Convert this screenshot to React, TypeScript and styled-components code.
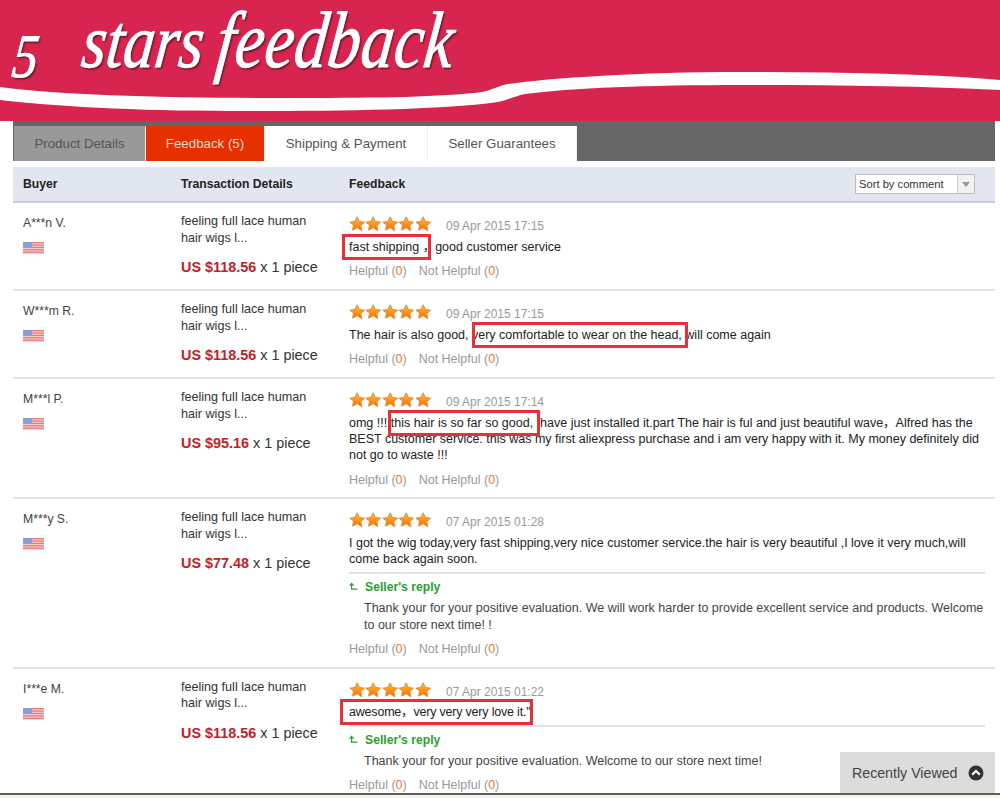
import React from "react";
import styled, { createGlobalStyle } from "styled-components";

const GlobalStyle = createGlobalStyle`
  html, body {
    margin: 0;
    padding: 0;
    height: 798px;
    overflow: hidden;
    background: #fff;
    font-family: "Liberation Sans", "Noto Sans CJK SC", Arial, sans-serif;
  }
`;

const Page = styled.div`
  position: relative;
  width: 1000px;
  height: 798px;
  overflow: hidden;
`;

const Banner = styled.header`
  position: relative;
  height: 121px;
  background: #d8254f;
`;

const Wave = styled.svg`
  position: absolute;
  left: 0;
  top: 0;
`;

const Title = styled.h1`
  position: relative;
  margin: 0;
  padding: 0 0 0 24px;
  font-family: "Liberation Serif", "Times New Roman", serif;
  font-style: italic;
  font-weight: 400;
  font-size: 76px;
  line-height: 80px;
  white-space: pre;
  color: #fff;
  -webkit-text-stroke: 1px #fff;
  text-shadow: 2px 2px 2px rgba(70, 20, 30, 0.75);
  transform-origin: left top;
  transform: scaleX(0.82) skewX(-8deg);
`;

const Numeral = styled.span`
  font-size: 62px;
  margin-right: 52px;
  vertical-align: -10px;
`;

const Feedback = styled.span`
  font-size: 80px;
  letter-spacing: 0.6px;
  margin-left: 16px;
`;

const Content = styled.main`
  margin: 0 5px 0 13px;
`;

const TabBar = styled.nav`
  display: flex;
  align-items: flex-end;
  height: 40px;
  padding-left: 1px;
  box-sizing: border-box;
  background: #666;
`;

const Tab = styled.div<{ $kind?: "muted" | "active"; $width: number }>`
  width: ${(p) => p.$width}px;
  height: 35px;
  box-sizing: border-box;
  display: flex;
  align-items: center;
  justify-content: center;
  font-size: 13.3px;
  border-right: 1px solid #eee;
  color: ${(p) => (p.$kind === "active" ? "#f4d9c8" : "#555")};
  background: ${(p) =>
    p.$kind === "active" ? "#e63000" : p.$kind === "muted" ? "#999" : "#fff"};
`;

const HeaderRow = styled.div`
  display: grid;
  grid-template-columns: 158px 168px 1fr;
  align-items: center;
  height: 36px;
  margin-top: 6px;
  padding-left: 10px;
  box-sizing: border-box;
  background: #e2e6f0;
  border-bottom: 2px solid #c6cede;
  font-size: 12.2px;
  font-weight: 700;
  color: #222;
`;

const HeaderCells = styled.div`
  display: flex;
  justify-content: space-between;
  align-items: center;
  padding-right: 20px;
`;

const SortSelect = styled.div`
  display: flex;
  width: 120px;
  height: 20px;
  box-sizing: border-box;
  border: 1px solid #bbb;
  background: #fff;
  font-weight: 400;
  font-size: 11.2px;
  color: #333;
`;

const SortLabel = styled.span`
  flex: 1;
  padding-left: 3px;
  line-height: 19px;
`;

const SortArrow = styled.span`
  width: 16px;
  display: flex;
  align-items: center;
  justify-content: center;
  background: #f2f2f2;
  border-left: 1px solid #ccc;

  &::after {
    content: "";
    border: 4px solid transparent;
    border-top: 5px solid #999;
    border-bottom: 0;
  }
`;

const Row = styled.article`
  display: grid;
  grid-template-columns: 158px 168px 1fr;
  padding: 11px 0 0 10px;
  border-bottom: 2px solid #e3e3e3;
  font-size: 12.5px;
  color: #333;
`;

const BuyerName = styled.div`
  font-size: 12.2px;
  line-height: 18px;
  color: #444;
`;

const Flag = styled.svg`
  display: block;
  margin-top: 10px;
`;

const Product = styled.div`
  font-size: 12.6px;
  line-height: 16.5px;
  width: 140px;
  margin-top: -1px;
`;

const Price = styled.div`
  margin-top: 12px;
  font-size: 14.4px;
  line-height: 18px;
`;

const Amount = styled.strong`
  color: #c4202a;
`;

const Body = styled.div`
  min-width: 0;
  padding-right: 10px;
`;

const StarLine = styled.div`
  display: flex;
  align-items: center;
  height: 20px;
  gap: 15px;
`;

const Stars = styled.div`
  display: flex;
`;

const DateText = styled.span`
  padding-top: 4px;
  font-size: 12px;
  color: #999;
`;

const Comment = styled.p`
  margin: 4.5px 0 0;
  padding-right: 4px;
  line-height: 16.2px;
  color: #222;
`;

const Marked = styled.span<{ $left: number; $right: number; $tight?: boolean }>`
  padding: 6px ${(p) => p.$right}px 6px ${(p) => p.$left}px;
  margin: 0 ${(p) => -p.$right}px 0 ${(p) => -p.$left}px;
  outline: 3px solid #e8303c;
  outline-offset: -3px;
  letter-spacing: ${(p) => (p.$tight ? "-0.2px" : "normal")};
`;

const Reply = styled.div`
  margin-top: 5px;
  padding-top: 4px;
  border-top: 2px solid #e3e3e3;
`;

const ReplyHead = styled.div`
  display: flex;
  align-items: center;
  gap: 7px;
  height: 18px;
  font-size: 12.2px;
  font-weight: 700;
  color: #2aa12a;
`;

const ReplyText = styled.p`
  margin: 4px 0 -2px 15px;
  line-height: 17px;
  color: #444;
`;

const Votes = styled.div`
  display: flex;
  gap: 12px;
  margin-top: 8.5px;
  height: 25.8px;
  line-height: 16px;
  color: #999;
`;

const Count = styled.span`
  color: #e8772e;
`;

const Recent = styled.aside`
  position: absolute;
  left: 840px;
  top: 752px;
  width: 155px;
  height: 41px;
  box-sizing: border-box;
  padding: 0 11px 0 12px;
  display: flex;
  align-items: center;
  justify-content: space-between;
  background: #dcdcdc;
  font-size: 14.2px;
  color: #444;
`;

const BottomEdge = styled.div`
  position: absolute;
  left: 0;
  right: 0;
  top: 793px;
  height: 5px;
  box-sizing: border-box;
  border-top: 2px solid #5c6050;
  background: #f4f4f0;
`;

const Star = () => (
  <svg width="16.4" height="16" viewBox="0 0 24 24">
    <defs>
      <linearGradient id="starFill" x1="0" y1="0" x2="0" y2="1">
        <stop offset="0" stopColor="#ffc04d" />
        <stop offset="0.55" stopColor="#fb8f1c" />
        <stop offset="1" stopColor="#f06c0c" />
      </linearGradient>
    </defs>
    <path
      d="M12 1.200l3.300 7 7.700 1-5.600 5.300 1.500 7.700L12 17.500l-6.900 3.700 1.500-7.700L1 9.200l7.700-1z"
      fill="url(#starFill)"
      stroke="#f28a20"
      strokeWidth="1.500"
      strokeLinejoin="round"
    />
  </svg>
);

const UsFlag = () => (
  <Flag width="21" height="12" viewBox="0 0 21 12">
    <rect width="21" height="12" fill="#f4d5d5" />
    {[0, 2.4, 4.8, 7.2, 9.6].map((y) => (
      <rect key={y} y={y} width="21" height="1.3" fill="#e27a7a" />
    ))}
    <rect width="9" height="6" fill="#8a9fd6" />
  </Flag>
);

const ReplyArrow = () => (
  <svg width="9" height="10" viewBox="0 0 9 10" fill="none" stroke="#2aa12a" strokeWidth="1.2">
    <path d="M0.600 3.600L2.600 1.400L4.600 3.600M2.600 1.600V7.200H8.500" />
  </svg>
);

const UpIcon = () => (
  <svg width="16" height="16" viewBox="0 0 16 16">
    <circle cx="8" cy="8" r="7.500" fill="#333" />
    <path d="M4.200 9.800L8 6l3.800 3.800" fill="none" stroke="#fff" strokeWidth="2" />
  </svg>
);

type Review = {
  buyer: string;
  price: string;
  date: string;
  comment: React.ReactNode;
  reply?: React.ReactNode;
};

const reviews: Review[] = [
  {
    buyer: "A***n V.",
    price: "US $118.56",
    date: "09 Apr 2015 17:15",
    comment: (
      <>
        <Marked $left={7} $right={12}>
          fast shipping
        </Marked>{" "}
        ，good customer service
      </>
    ),
  },
  {
    buyer: "W***m R.",
    price: "US $118.56",
    date: "09 Apr 2015 17:15",
    comment: (
      <>
        The hair is also good,{" "}
        <Marked $left={0} $right={6}>
          very comfortable to wear on the head,
        </Marked>{" "}
        will come again
      </>
    ),
  },
  {
    buyer: "M***l P.",
    price: "US $95.16",
    date: "09 Apr 2015 17:14",
    comment: (
      <>
        omg !!!{" "}
        <Marked $left={3} $right={7}>
          this hair is so far so good,
        </Marked>{" "}
        &nbsp;have just installed it.part The hair is ful and just beautiful wave，Alfred has the BEST customer service.
        this was my first aliexpress purchase and i am very happy with it. My money definitely did not go to waste !!!
      </>
    ),
  },
  {
    buyer: "M***y S.",
    price: "US $77.48",
    date: "07 Apr 2015 01:28",
    comment:
      "I got the wig today,very fast shipping,very nice customer service.the hair is very beautiful ,I love it very much,will come back again soon.",
    reply:
      "Thank your for your positive evaluation. We will work harder to provide excellent service and products. Welcome to our store next time! !",
  },
  {
    buyer: "I***e M.",
    price: "US $118.56",
    date: "07 Apr 2015 01:22",
    comment: (
      <Marked $left={9} $right={3} $tight>
        awesome，very very very love it."
      </Marked>
    ),
    reply: "Thank your for your positive evaluation. Welcome to our store next time!",
  },
];

export default function App() {
  return (
    <Page>
      <GlobalStyle />
      <Banner>
        <Wave width="1000" height="121" viewBox="0 0 1000 121">
          <path
            d="M0 87C70 96 170 98 300 98C380 98 440 97 482 92C492 90 498 86 508 84C550 78 640 72 740 72C830 72 920 73 1000 80V90C920 86 830 85 740 85C650 85 570 88 525 94C515 96 508 100 498 102C440 110 340 111 250 111C150 111 70 108 0 100Z"
            fill="#fff"
          />
        </Wave>
        <Title>
          <Numeral>5</Numeral>
          {"stars"}
          <Feedback>feedback</Feedback>
        </Title>
      </Banner>
      <Content>
        <TabBar>
          <Tab $kind="muted" $width={132}>
            Product Details
          </Tab>
          <Tab $kind="active" $width={119}>
            Feedback (5)
          </Tab>
          <Tab $width={163}>Shipping &amp; Payment</Tab>
          <Tab $width={149}>Seller Guarantees</Tab>
        </TabBar>
        <HeaderRow>
          <span>Buyer</span>
          <span>Transaction Details</span>
          <HeaderCells>
            <span>Feedback</span>
            <SortSelect>
              <SortLabel>Sort by comment</SortLabel>
              <SortArrow />
            </SortSelect>
          </HeaderCells>
        </HeaderRow>
        {reviews.map((r) => (
          <Row key={r.buyer}>
            <div>
              <BuyerName>{r.buyer}</BuyerName>
              <UsFlag />
            </div>
            <div>
              <Product>feeling full lace human hair wigs l...</Product>
              <Price>
                <Amount>{r.price}</Amount> x 1 piece
              </Price>
            </div>
            <Body>
              <StarLine>
                <Stars>
                  {[1, 2, 3, 4, 5].map((n) => (
                    <Star key={n} />
                  ))}
                </Stars>
                <DateText>{r.date}</DateText>
              </StarLine>
              <Comment>{r.comment}</Comment>
              {r.reply && (
                <Reply>
                  <ReplyHead>
                    <ReplyArrow />
                    Seller's reply
                  </ReplyHead>
                  <ReplyText>{r.reply}</ReplyText>
                </Reply>
              )}
              <Votes>
                <span>
                  Helpful (<Count>0</Count>)
                </span>
                <span>
                  Not Helpful (<Count>0</Count>)
                </span>
              </Votes>
            </Body>
          </Row>
        ))}
      </Content>
      <Recent>
        Recently Viewed
        <UpIcon />
      </Recent>
      <BottomEdge />
    </Page>
  );
}
